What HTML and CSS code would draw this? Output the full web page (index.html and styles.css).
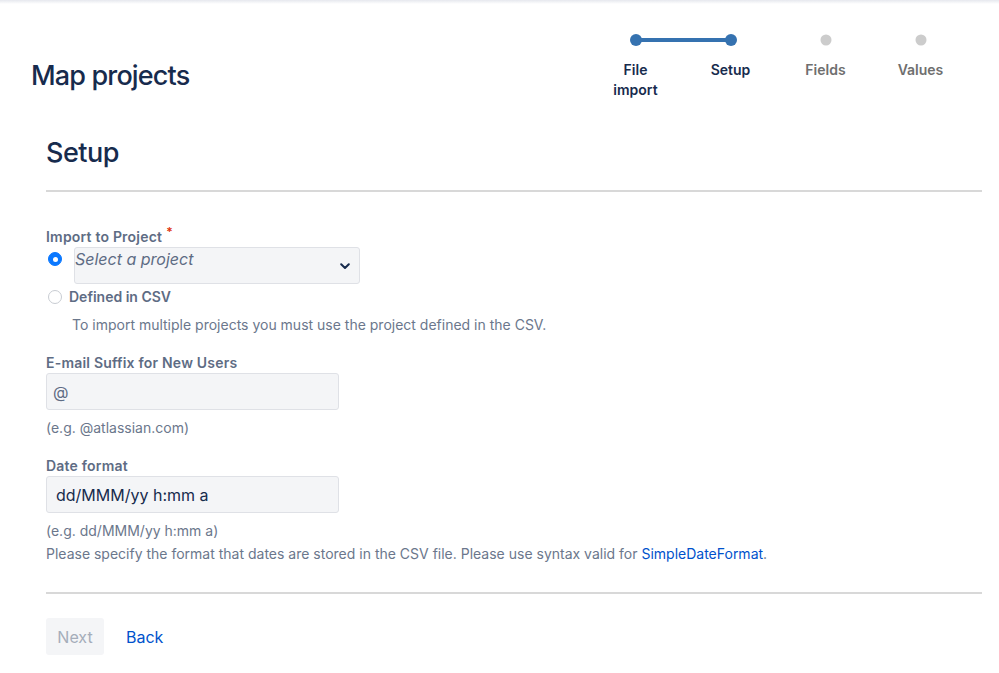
FILE: index.html
```html
<!DOCTYPE html>
<html>
<head>
<meta charset="utf-8">
<link rel="stylesheet" href="styles.css">
</head>
<body>
<div class="topbar"></div>
<header class="header">
  <h1 class="title">Map projects</h1>
  <ol class="steps">
    <li class="step done"><span class="dot"></span><span class="step-label">File import</span></li>
    <li class="step done current"><span class="dot"></span><span class="step-label">Setup</span></li>
    <li class="step"><span class="dot"></span><span class="step-label">Fields</span></li>
    <li class="step"><span class="dot"></span><span class="step-label">Values</span></li>
  </ol>
</header>
<main class="main">
  <h2 class="heading">Setup</h2>
  <hr class="rule">
  <div class="field first">
    <div class="label">Import to Project<span class="req">*</span></div>
    <div class="radio-row">
      <span class="radio checked"></span>
      <div class="select">
        <span class="select-text">Select a project</span>
        <svg class="chev" width="10" height="7" viewBox="0 0 10 7"><path d="M1.2 1.2 L5 5 L8.8 1.2" fill="none" stroke="#172b4d" stroke-width="2" stroke-linecap="round" stroke-linejoin="round"/></svg>
      </div>
    </div>
    <div class="radio-row second">
      <span class="radio"></span>
      <span class="radio-label">Defined in CSV</span>
    </div>
    <div class="desc indent">To import multiple projects you must use the project defined in the CSV.</div>
  </div>
  <div class="field">
    <div class="label">E-mail Suffix for New Users</div>
    <div class="input muted">@</div>
    <div class="desc">(e.g. @atlassian.com)</div>
  </div>
  <div class="field">
    <div class="label">Date format</div>
    <div class="input value">dd/MMM/yy h:mm a</div>
    <div class="desc">(e.g. dd/MMM/yy h:mm a)</div>
    <div class="desc tight">Please specify the format that dates are stored in the CSV file. Please use syntax valid for <a class="link" href="#">SimpleDateFormat</a>.</div>
  </div>
  <hr class="rule bottom">
  <div class="actions">
    <button class="btn" disabled>Next</button>
    <a class="link back" href="#">Back</a>
  </div>
</main>
</body>
</html>
```
FILE: styles.css
```css
* { box-sizing: border-box; }
html, body { margin: 0; padding: 0; background: #fff; }
body {
  font-family: Inter, "Liberation Sans", Arial, sans-serif;
  color: #172b4d;
  width: 999px;
}
.topbar {
  height: 4px;
  background: linear-gradient(#e6e8ee, #fff);
}
.header {
  display: flex;
  justify-content: space-between;
  align-items: flex-start;
  padding: 30px 46px 0 31px;
}
.title {
  margin: 26px 0 0;
  font-size: 27px;
  line-height: 32px;
  font-weight: 500;
  letter-spacing: -0.85px;
  color: #172b4d;
}
.steps {
  list-style: none;
  margin: 0;
  padding: 0;
  display: flex;
  gap: 30px;
}
.step {
  width: 65px;
  display: flex;
  flex-direction: column;
  align-items: center;
  position: relative;
}
.dot {
  width: 12px;
  height: 12px;
  border-radius: 50%;
  background: #ccc;
  transform: scale(0.92);
}
.step.done .dot { background: #3572b0; transform: none; }
.step.current::before {
  content: "";
  position: absolute;
  top: 4px;
  left: -62px;
  width: 94px;
  height: 4px;
  background: #3572b0;
}
.step-label {
  margin-top: 14px;
  font-size: 14px;
  line-height: 20px;
  font-weight: 600;
  text-align: center;
  color: #6f6f6f;
}
.step.done .step-label { color: #172b4d; }

.main {
  padding: 0 17px 0 46px;
  margin-top: 37px;
}
.heading {
  margin: 0;
  font-size: 27px;
  line-height: 32px;
  font-weight: 500;
  letter-spacing: -0.5px;
  color: #172b4d;
}
.rule {
  margin: 21px 0 0;
  border: 0;
  height: 2px;
  background: #d8d8d8;
}
.field { margin-top: 18px; }
.field.first { margin-top: 35px; }
.label {
  font-size: 14px;
  line-height: 20px;
  font-weight: 600;
  letter-spacing: 0.2px;
  color: #5e6c84;
}
.req {
  color: #de350b;
  font-size: 12px;
  vertical-align: top;
  position: relative;
  top: -5px;
  margin-left: 4px;
}
.radio-row {
  display: flex;
  align-items: flex-start;
}
.radio-row.second { margin-top: 3px; align-items: center; height: 20px; }
.radio {
  width: 14px;
  height: 14px;
  border-radius: 50%;
  border: 1px solid #c8ccd2;
  background: #fff;
  margin: 5px 12px 0 2px;
  flex: none;
  display: flex;
  align-items: center;
  justify-content: center;
}
.radio-row.second .radio { margin-top: 0; margin-right: 7px; }
.radio.checked {
  background: #0a78ff;
  border-color: #0a78ff;
}
.radio.checked::after {
  content: "";
  width: 5px;
  height: 5px;
  border-radius: 50%;
  background: #fff;
}
.select {
  width: 286px;
  height: 37px;
  background: #f4f5f7;
  border: 1px solid #dfe1e6;
  border-radius: 3px;
  position: relative;
}
.select-text {
  display: block;
  font-size: 16px;
  line-height: 20px;
  font-style: italic;
  color: #5e6c84;
  margin-top: 1px;
}
.chev {
  position: absolute;
  right: 9px;
  top: 15px;
}
.radio-label {
  font-size: 14px;
  font-weight: 600;
  color: #5e6c84;
  line-height: 20px;
}
.desc {
  margin-top: 8px;
  font-size: 14px;
  line-height: 20px;
  color: #6b778c;
}
.desc.indent { margin-left: 26px; }
.desc.tight { margin-top: 3px; }
.input {
  width: 293px;
  height: 37px;
  background: #f4f5f7;
  border: 1px solid #dfe1e6;
  border-radius: 3px;
  display: flex;
  align-items: center;
}
.input.muted {
  padding-left: 6px;
  font-size: 16px;
  color: #5e6c84;
}
.input.value {
  padding-left: 9px;
  font-size: 16px;
  color: #172b4d;
}
.link { color: #0052cc; text-decoration: none; }
.rule.bottom { margin-top: 28px; }
.actions {
  margin-top: 24px;
  display: flex;
  align-items: center;
  gap: 22px;
}
.btn {
  width: 58px;
  height: 37px;
  border: 0;
  border-radius: 3px;
  background: #f4f5f7;
  color: #a5adba;
  font-family: inherit;
  font-size: 16px;
  padding: 0;
}
.back { font-size: 16px; }
```
